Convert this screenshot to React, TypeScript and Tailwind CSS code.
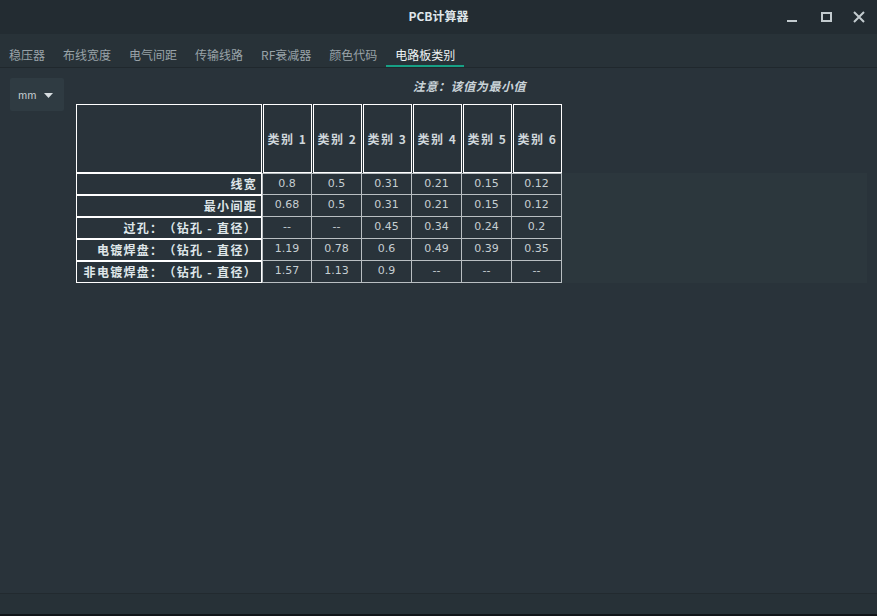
import React from 'react';

const tabs = ['稳压器', '布线宽度', '电气间距', '传输线路', 'RF衰减器', '颜色代码', '电路板类别'];

const rows = [
  { label: '线宽', values: ['0.8', '0.5', '0.31', '0.21', '0.15', '0.12'] },
  { label: '最小间距', values: ['0.68', '0.5', '0.31', '0.21', '0.15', '0.12'] },
  { label: '过孔：（钻孔 - 直径）', values: ['--', '--', '0.45', '0.34', '0.24', '0.2'] },
  { label: '电镀焊盘：（钻孔 - 直径）', values: ['1.19', '0.78', '0.6', '0.49', '0.39', '0.35'] },
  { label: '非电镀焊盘：（钻孔 - 直径）', values: ['1.57', '1.13', '0.9', '--', '--', '--'] },
];

const font = { fontFamily: '"Noto Sans CJK SC", "DejaVu Sans", sans-serif' };

export default function App() {
  return (
    <div
      className="w-[877px] h-[616px] flex flex-col bg-[#29333a] overflow-hidden [text-spacing-trim:space-all]"
      style={font}
    >
      {/* title bar */}
      <div className="h-[34px] bg-[#232c32] flex items-center relative shrink-0">
        <div className="flex-1 text-center text-[12px] font-bold text-[#dfe6ea] -mt-[2px]">PCB计算器</div>
        <div className="absolute right-0 top-0 h-[34px] flex items-center">
          <div className="w-[34px] flex justify-center">
            <div className="w-[10px] h-[2px] bg-[#c3cbcf] mt-[8px]" />
          </div>
          <div className="w-[34px] flex justify-center">
            <div className="w-[11px] h-[10px] border-2 border-[#c3cbcf]" />
          </div>
          <div className="w-[34px] flex justify-center pr-[2px]">
            <svg width="12" height="12" viewBox="0 0 12 12">
              <path d="M1 1 L11 11 M11 1 L1 11" stroke="#c3cbcf" strokeWidth="2" />
            </svg>
          </div>
        </div>
      </div>

      {/* tabs */}
      <div className="h-[34px] bg-[#283238] border-b border-[#20282d] flex items-stretch shrink-0">
        {tabs.map((t, i) => (
          <div
            key={t}
            className={`px-[9px] pt-[8px] flex items-center text-[12px] relative ${
              i === tabs.length - 1 ? 'text-[#eef2f4]' : 'text-[#99a3a8]'
            }`}
          >
            {t}
            {i === tabs.length - 1 && <div className="absolute left-0 right-0 bottom-0 h-[2px] bg-[#17a085]" />}
          </div>
        ))}
      </div>

      {/* content */}
      <div className="flex-1 flex pl-[10px] pt-[10px]">
        <div className="w-[54px] h-[33px] bg-[#2f3b42] rounded-[2px] flex items-center pl-[8px] gap-[10px] shrink-0">
          <span className="text-[10px] text-[#c9d1d5] w-[16px]">mm</span>
          <svg width="9" height="5" viewBox="0 0 9 5" className="mt-[2px]">
            <path d="M0 0 L9 0 L4.5 5 Z" fill="#d7dde0" />
          </svg>
        </div>

        <div className="flex-1 ml-[12px] mr-[10px] flex flex-col">
          <div className="text-center text-[12px] font-bold italic text-[#c8d2d7] h-[16px] leading-[16px] pr-[4px] tracking-[0.6px]">
            注意：该值为最小值
          </div>

          <div className="mt-[10px] flex flex-col">
            {/* header row */}
            <div className="flex h-[69px]">
              <div className="w-[186px] h-[69px] border border-white shrink-0" />
              {[1, 2, 3, 4, 5, 6].map((n) => (
                <div
                  key={n}
                  className="w-[49px] ml-px h-[69px] border border-white flex items-center justify-center text-[12px] font-bold text-[#d0d8dc] tracking-[1.5px] whitespace-nowrap"
                >
                  类别 {n}
                </div>
              ))}
            </div>

            {/* data rows */}
            <div className="bg-[#2c373d] flex flex-col">
              {rows.map((r, ri) => (
                <div key={r.label} className="flex h-[22px]">
                  <div className="w-[186px] h-[22px] border border-white shrink-0 flex items-center justify-end pr-[4px] text-[12px] font-bold text-[#dfe6e9] tracking-[1.3px] whitespace-nowrap bg-[#29333a]">
                    {r.label}
                  </div>
                  <div className="flex bg-[#29333a]">
                    {r.values.map((v, vi) => (
                      <div
                        key={vi}
                        className={`w-[50px] h-[22px] border-r border-b border-[#b9bfc2] flex items-center justify-center text-[11px] text-[#c6ced2] ${
                          vi === 0 ? 'border-l' : ''
                        } ${ri === 0 ? 'border-t' : ''}`}
                        style={{ fontFamily: '"DejaVu Sans", sans-serif' }}
                      >
                        {v}
                      </div>
                    ))}
                  </div>
                </div>
              ))}
            </div>
          </div>
        </div>
      </div>

      {/* bottom */}
      <div className="h-[21px] border-t border-[#222a2f] bg-[#273137] shrink-0" />
      <div className="h-[2px] bg-[#111518] shrink-0" />
    </div>
  );
}
